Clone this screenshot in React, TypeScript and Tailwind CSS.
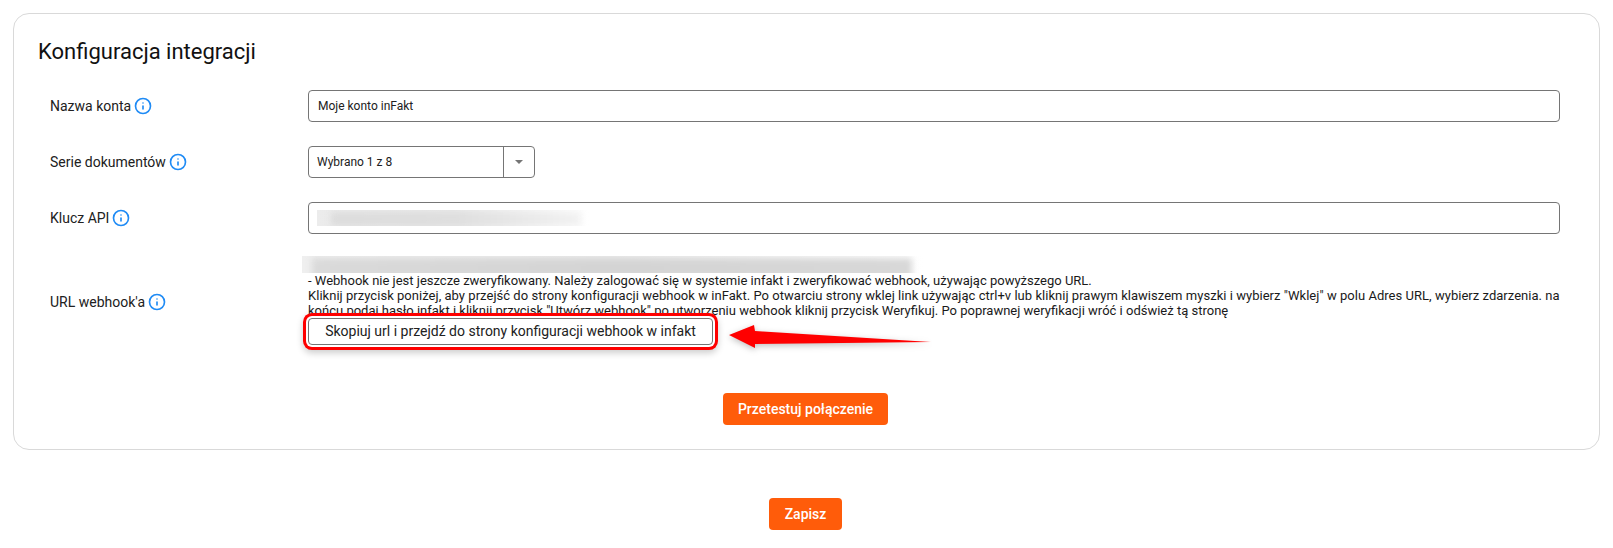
import type { ReactNode } from "react";
import { Info } from "lucide-react";

function Row({ label, children }: { label: string; children: ReactNode }) {
  return (
    <div className="flex items-center">
      <div className="flex w-[294px] shrink-0 items-center gap-[3px] pl-[36px] text-[14px] text-[#212121]">
        <span>{label}</span>
        <Info size={18} strokeWidth={2.2} className="text-[#1f8bf5]" />
      </div>
      <div className="min-w-0 flex-1">{children}</div>
    </div>
  );
}

function Blur({ className }: { className: string }) {
  return <div className={className} />;
}

export default function App() {
  return (
    <div className="min-h-[548px] bg-white pt-[13px] font-['Roboto',sans-serif] text-[#212121]">
      <div className="mx-[13px] h-[437px] rounded-[16px] border border-[#d9d9d9] pt-[23px] pr-[39px]">
        <h2 className="pl-[24px] text-[22px] leading-[30px] font-normal text-[#111]">Konfiguracja integracji</h2>

        <div className="mt-[23px] flex flex-col gap-[24px]">
          <Row label="Nazwa konta">
            <div className="flex h-[32px] items-center rounded-[4px] border border-[#757575] px-[9px] text-[12px]">
              Moje konto inFakt
            </div>
          </Row>

          <Row label="Serie dokumentów">
            <div className="flex h-[32px] w-[227px] items-center rounded-[4px] border border-[#757575] text-[12px]">
              <span className="flex-1 px-[8px]">Wybrano 1 z 8</span>
              <span className="flex h-full w-[31px] items-center justify-center border-l border-[#757575]">
                <span className="h-0 w-0 border-x-[4px] border-t-[4px] border-x-transparent border-t-[#757575]" />
              </span>
            </div>
          </Row>

          <Row label="Klucz API">
            <div className="flex h-[32px] items-center overflow-hidden rounded-[4px] border border-[#757575] pl-[8px]">
              <div className="h-[16px] w-[272px] overflow-hidden bg-gradient-to-r from-[#ececec] via-[#e8e8e8] to-white">
                <Blur className="mt-[2px] ml-[14px] h-[14px] w-[250px] bg-gradient-to-r from-[#dcdcdc] via-[#dedede] to-[#f2f2f2] blur-[3px]" />
              </div>
            </div>
          </Row>

          <div className="-mt-[2px]">
            <Row label="URL webhook'a">
              <div className="relative">
                <div className="-ml-[6px] h-[17px] w-[622px] overflow-hidden bg-gradient-to-r from-[#efefef] via-[#ececec] to-white">
                  <Blur className="mt-[2px] ml-[10px] h-[20px] w-[600px] bg-gradient-to-r from-[#dadada] via-[#d4d4d4] to-[#d8d8d8] blur-[3px]" />
                </div>
                <div className="h-[45px] text-[13px] leading-[15px] text-[#1a1a1a]">
                  <div>- Webhook nie jest jeszcze zweryfikowany. Należy zalogować się w systemie infakt i zweryfikować webhook, używając powyższego URL.</div>
                  <div className="whitespace-nowrap tracking-[0.033px]">
                    Kliknij przycisk poniżej, aby przejść do strony konfiguracji webhook w inFakt. Po otwarciu strony wklej link używając ctrl+v lub kliknij prawym klawiszem myszki i wybierz "Wklej" w polu Adres URL, wybierz zdarzenia. na
                  </div>
                  <div>
                    końcu podaj hasło infakt i kliknij przycisk "Utwórz webhook" po utworzeniu webhook kliknij przycisk Weryfikuj. Po poprawnej weryfikacji wróć i odśwież tą stronę
                  </div>
                </div>
                <button className="relative block h-[27px] w-[405px] rounded-[4px] border border-[#757575] bg-white text-center text-[14px] text-[#212121] shadow-[0_0_0_2px_#fff,0_0_0_5px_#f00,0_3px_7px_5px_rgba(0,0,0,0.2)]">
                  Skopiuj url i przejdź do strony konfiguracji webhook w infakt
                </button>
                <svg className="absolute top-[64px] left-[415px] overflow-visible" width="210" height="30" viewBox="0 0 210 30" fill="none">
                  <path d="M6 15 L31 5 L32 11 L208 22 L32 24 L32 28 Z" fill="#f00" style={{ filter: "drop-shadow(0 2px 3px rgba(0,0,0,0.25))" }} />
                </svg>
                <div className="h-[3px]" />
              </div>
            </Row>
          </div>
        </div>

        <div className="mt-[45px] flex justify-center pl-[37px]">
          <button className="h-[32px] w-[165px] rounded-[4px] bg-[#ff5c0a] text-[14px] font-medium text-white">Przetestuj połączenie</button>
        </div>
      </div>

      <div className="mt-[48px] flex justify-center pr-[2px]">
        <button className="h-[32px] w-[73px] rounded-[4px] bg-[#ff5c0a] text-[14px] font-medium text-white">Zapisz</button>
      </div>
    </div>
  );
}
